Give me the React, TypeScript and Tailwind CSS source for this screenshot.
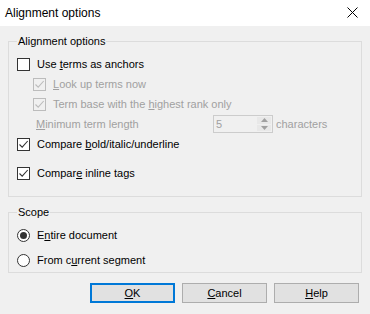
import type { ReactNode } from "react";

function CheckBox({ checked, disabled }: { checked?: boolean; disabled?: boolean }) {
  const stroke = disabled ? "#bcbcbc" : "#333333";
  return (
    <span
      className={
        "flex size-[13px] shrink-0 items-center justify-center border " +
        (disabled ? "border-[#bcbcbc] bg-[#f0f0f0]" : "border-[#333333] bg-white")
      }
    >
      {checked && (
        <svg width="11" height="11" viewBox="0 0 11 11">
          <path d="M1.5 5.5 L4.2 8.2 L9.7 2" fill="none" stroke={stroke} strokeWidth="1.1" />
        </svg>
      )}
    </span>
  );
}

function Radio({ checked }: { checked?: boolean }) {
  return (
    <span className="flex size-[13px] shrink-0 items-center justify-center rounded-full border border-[#333333] bg-white">
      {checked && <span className="size-[7px] rounded-full bg-[#333333]" />}
    </span>
  );
}

function Row({ children, className = "" }: { children: ReactNode; className?: string }) {
  return <div className={"flex h-[20px] items-center gap-[7px] " + className}>{children}</div>;
}

function Group({ title, children, className = "" }: { title: string; children: ReactNode; className?: string }) {
  return (
    <fieldset className={"mx-[8px] border border-[#dcdcdc] p-0 " + className}>
      <legend className="ml-[8px] px-[1px] leading-[14px] text-black">{title}</legend>
      <div className="pl-[8px]">{children}</div>
    </fieldset>
  );
}

function Btn({ children, focused }: { children: ReactNode; focused?: boolean }) {
  return (
    <button
      type="button"
      className={
        "flex h-[20px] w-[85px] items-center justify-center bg-[#e1e1e1] text-black " +
        (focused ? "border-2 border-[#0078d7]" : "border border-[#adadad]")
      }
    >
      {children}
    </button>
  );
}

export default function App() {
  return (
    <div className="h-[314px] w-[370px] overflow-hidden bg-[#f0f0f0] font-['Liberation_Sans',Arial,sans-serif] text-[11px] text-black">
      {/* title bar */}
      <div className="flex h-[26px] items-center justify-between bg-white pl-[5px] pr-[12px]">
        <span className="text-[12px]">Alignment options</span>
        <svg width="11" height="11" viewBox="0 0 11 11" className="mb-[1px]">
          <path d="M0.5 0.5 L10.5 10.5 M10.5 0.5 L0.5 10.5" stroke="#000" strokeWidth="1" />
        </svg>
      </div>

      <Group title="Alignment options" className="mt-[8px] pb-[13px]">
        <Row className="mt-[6px]">
          <CheckBox />
          <span>
            Use <u>t</u>erms as anchors
          </span>
        </Row>
        <Row className="ml-[16px] text-[#a0a0a0]">
          <CheckBox checked disabled />
          <span>
            <u>L</u>ook up terms now
          </span>
        </Row>
        <Row className="ml-[16px] text-[#a0a0a0]">
          <CheckBox checked disabled />
          <span>
            Term base with the <u>h</u>ighest rank only
          </span>
        </Row>
        <div className="flex h-[20px] items-center text-[#a0a0a0]">
          <span className="ml-[19px] w-[177px]">
            <u>M</u>inimum term length
          </span>
          <div className="flex h-[18px] w-[60px] items-stretch border border-[#cccccc] bg-[#f0f0f0]">
            <span className="flex-1 pl-[2px] leading-[16px]">5</span>
            <div className="flex w-[15px] flex-col gap-[1px] py-[1px] pr-[1px]">
              <div className="flex flex-1 items-center justify-center bg-[#e8e8e8]">
                <svg width="7" height="4" viewBox="0 0 7 4">
                  <path d="M0 4 L3.5 0 L7 4 Z" fill="#a0a0a0" />
                </svg>
              </div>
              <div className="flex flex-1 items-center justify-center bg-[#e8e8e8]">
                <svg width="7" height="4" viewBox="0 0 7 4">
                  <path d="M0 0 L3.5 4 L7 0 Z" fill="#a0a0a0" />
                </svg>
              </div>
            </div>
          </div>
          <span className="ml-[3px]">characters</span>
        </div>
        <Row>
          <CheckBox checked />
          <span>
            Compare <u>b</u>old/italic/underline
          </span>
        </Row>
        <Row className="mt-[9px]">
          <CheckBox checked />
          <span>
            Compar<u>e</u> inline tags
          </span>
        </Row>
      </Group>

      <Group title="Scope" className="mt-[8px] pb-[2px]">
        <Row className="mt-[6px]">
          <Radio checked />
          <span>
            E<u>n</u>tire document
          </span>
        </Row>
        <Row className="mt-[5px]">
          <Radio />
          <span>
            From c<u>u</u>rrent segment
          </span>
        </Row>
      </Group>

      <div className="mt-[10px] flex justify-end gap-[7px] pr-[11px]">
        <Btn focused>
          <span>
            <u>O</u>K
          </span>
        </Btn>
        <Btn>
          <span>
            <u>C</u>ancel
          </span>
        </Btn>
        <Btn>
          <span>
            <u>H</u>elp
          </span>
        </Btn>
      </div>
    </div>
  );
}
